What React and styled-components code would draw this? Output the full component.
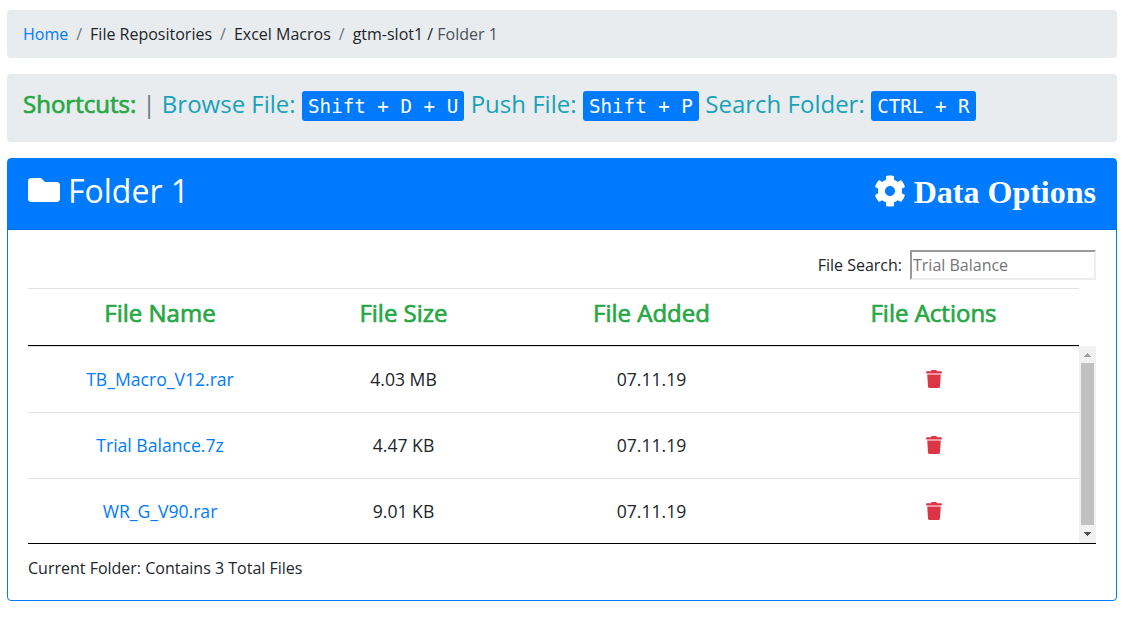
import React from "react";
import styled, { createGlobalStyle } from "styled-components";
import { FaFolder, FaCog, FaTrash } from "react-icons/fa";

const GlobalStyle = createGlobalStyle`
  *, *::before, *::after { box-sizing: border-box; }
  body {
    margin: 0;
    background: #fff;
    color: #212529;
    font: 400 16px/24px "Open Sans", sans-serif;
  }
  svg { display: block; }
`;

const Page = styled.main`
  display: flex;
  flex-direction: column;
  gap: 16px;
  padding: 10px 10px 0 7px;
`;

const Panel = styled.div`
  display: flex;
  align-items: flex-start;
  height: ${(p) => p.$height}px;
  padding: 12px 16px;
  border-radius: 4px;
  background: #e9ecef;
  white-space: pre;
`;

const Link = styled.a`
  color: #007bff;
  text-decoration: none;
`;

const Slash = styled.span`
  padding: 0 8px;
  color: #6c757d;
`;

const Current = styled.span`
  color: #495057;
`;

const ShortcutLine = styled.h4`
  margin: 0;
  font-size: 24px;
  font-weight: 400;
  line-height: 36px;
  color: #17a2b8;
`;

const Strong = styled.span`
  color: #28a745;
  -webkit-text-stroke: 0.7px #28a745;
`;

const Divider = styled.span`
  color: #6c757d;
`;

const Kbd = styled.kbd`
  display: inline-block;
  height: 30px;
  padding: 0 6.2px;
  border-radius: 3px;
  background: #007bff;
  color: #fff;
  font: 400 19.2px/32px "DejaVu Sans Mono", monospace;
`;

const Card = styled.section`
  height: 443px;
  border: 1px solid #007bff;
  border-radius: 4px;
`;

const CardHeader = styled.header`
  display: flex;
  justify-content: space-between;
  height: 71px;
  padding: 12px 20px;
  border-bottom: 1px solid #006fe6;
  background: #007bff;
  color: #fff;
`;

const Title = styled.h2`
  display: flex;
  align-items: center;
  gap: 8px;
  height: 38px;
  margin: 0;
  font-size: 32px;
  font-weight: 400;
  line-height: 38px;

  span { padding-top: 2px; }
`;

const Options = styled(Title)`
  font-family: "Liberation Serif", serif;
  font-weight: 700;
  padding-top: 2px;
`;

const CardBody = styled.div`
  padding: 20px;
`;

const SearchRow = styled.label`
  display: flex;
  justify-content: flex-end;
  align-items: center;
  gap: 8px;
  height: 30px;
  margin-bottom: 8px;
`;

const SearchInput = styled.input`
  width: 186px;
  height: 30px;
  padding: 1px;
  border: 2px solid;
  border-color: #9a9a9a #eee #eee #9a9a9a;
  background: #fff;
  font: inherit;
  &::placeholder { color: #757575; opacity: 1; }
`;

const Row = styled.div`
  display: grid;
  grid-template-columns: 264px 223px 273px 291px;
  width: 1051px;
  height: 66px;
  border-top: 1px solid #dee2e6;
  font-size: 17.6px;
  line-height: 65px;
  text-align: center;
`;

const HeadRow = styled(Row)`
  height: 58px;
  border-bottom: 1px solid #000;
  font-size: 24px;
  line-height: 48px;
`;

const Cell = styled.div`
  display: flex;
  justify-content: center;
  align-items: center;
  padding-bottom: 1px;
`;

const DeleteButton = styled.button`
  padding: 0;
  border: 0;
  background: none;
  color: #dc3545;
`;

const ScrollArea = styled.div`
  display: flex;
  height: 198px;
  overflow: hidden;
  border-bottom: 1px solid #000;
`;

const Scrollbar = styled.div`
  display: flex;
  flex-direction: column;
  justify-content: space-between;
  align-items: center;
  width: 17px;
  padding: 7px 0;
  background: #f1f1f1;
`;

const Thumb = styled.div`
  width: 13px;
  height: 162px;
  margin-bottom: 2px;
  background: #c1c1c1;
`;

const Footnote = styled.p`
  margin: 12px 0 0;
`;

const Arrow = ({ down, color }) => (
  <svg width="7" height="4" viewBox="0 0 7 4" shapeRendering="crispEdges" fill={color}>
    <path d={down ? "M0 0h7v1h-1v1h-1v1h-1v1h-1v-1h-1v-1h-1v-1h-1z" : "M0 4h7v-1h-1v-1h-1v-1h-1v-1h-1v1h-1v1h-1v1h-1z"} />
  </svg>
);

const files = [
  ["TB_Macro_V12.rar", "4.03 MB", "07.11.19"],
  ["Trial Balance.7z", "4.47 KB", "07.11.19"],
  ["WR_G_V90.rar", "9.01 KB", "07.11.19"],
];

export default function App() {
  return (
    <Page>
      <GlobalStyle />
      <Panel as="nav" $height={48}>
        <Link>Home</Link>
        <Slash>/</Slash>
        <span>File Repositories</span>
        <Slash>/</Slash>
        <span>Excel Macros</span>
        <Slash>/</Slash>
        <span>gtm-slot1 / </span>
        <Current>Folder 1</Current>
      </Panel>
      <Panel $height={68}>
        <ShortcutLine>
          <Strong>Shortcuts:</Strong> <Divider>|</Divider> Browse File: <Kbd>Shift + D + U</Kbd> Push File:{" "}
          <Kbd>Shift + P</Kbd> Search Folder: <Kbd>CTRL + R</Kbd>
        </ShortcutLine>
      </Panel>
      <Card>
        <CardHeader>
          <Title><FaFolder size={32} /><span>Folder 1</span></Title>
          <Options><FaCog size={32} /><span>Data Options</span></Options>
        </CardHeader>
        <CardBody>
          <SearchRow>
            File Search:
            <SearchInput placeholder="Trial Balance" />
          </SearchRow>
          <HeadRow>
            <Strong>File Name</Strong>
            <Strong>File Size</Strong>
            <Strong>File Added</Strong>
            <Strong>File Actions</Strong>
          </HeadRow>
          <ScrollArea>
            <div>
              {files.map(([name, size, added]) => (
                <Row key={name}>
                  <Link>{name}</Link>
                  <span>{size}</span>
                  <span>{added}</span>
                  <Cell><DeleteButton aria-label="Delete"><FaTrash size={18} /></DeleteButton></Cell>
                </Row>
              ))}
            </div>
            <Scrollbar>
              <Arrow color="#a3a3a3" />
              <Thumb />
              <Arrow down color="#505050" />
            </Scrollbar>
          </ScrollArea>
          <Footnote>Current Folder: Contains 3 Total Files</Footnote>
        </CardBody>
      </Card>
    </Page>
  );
}
